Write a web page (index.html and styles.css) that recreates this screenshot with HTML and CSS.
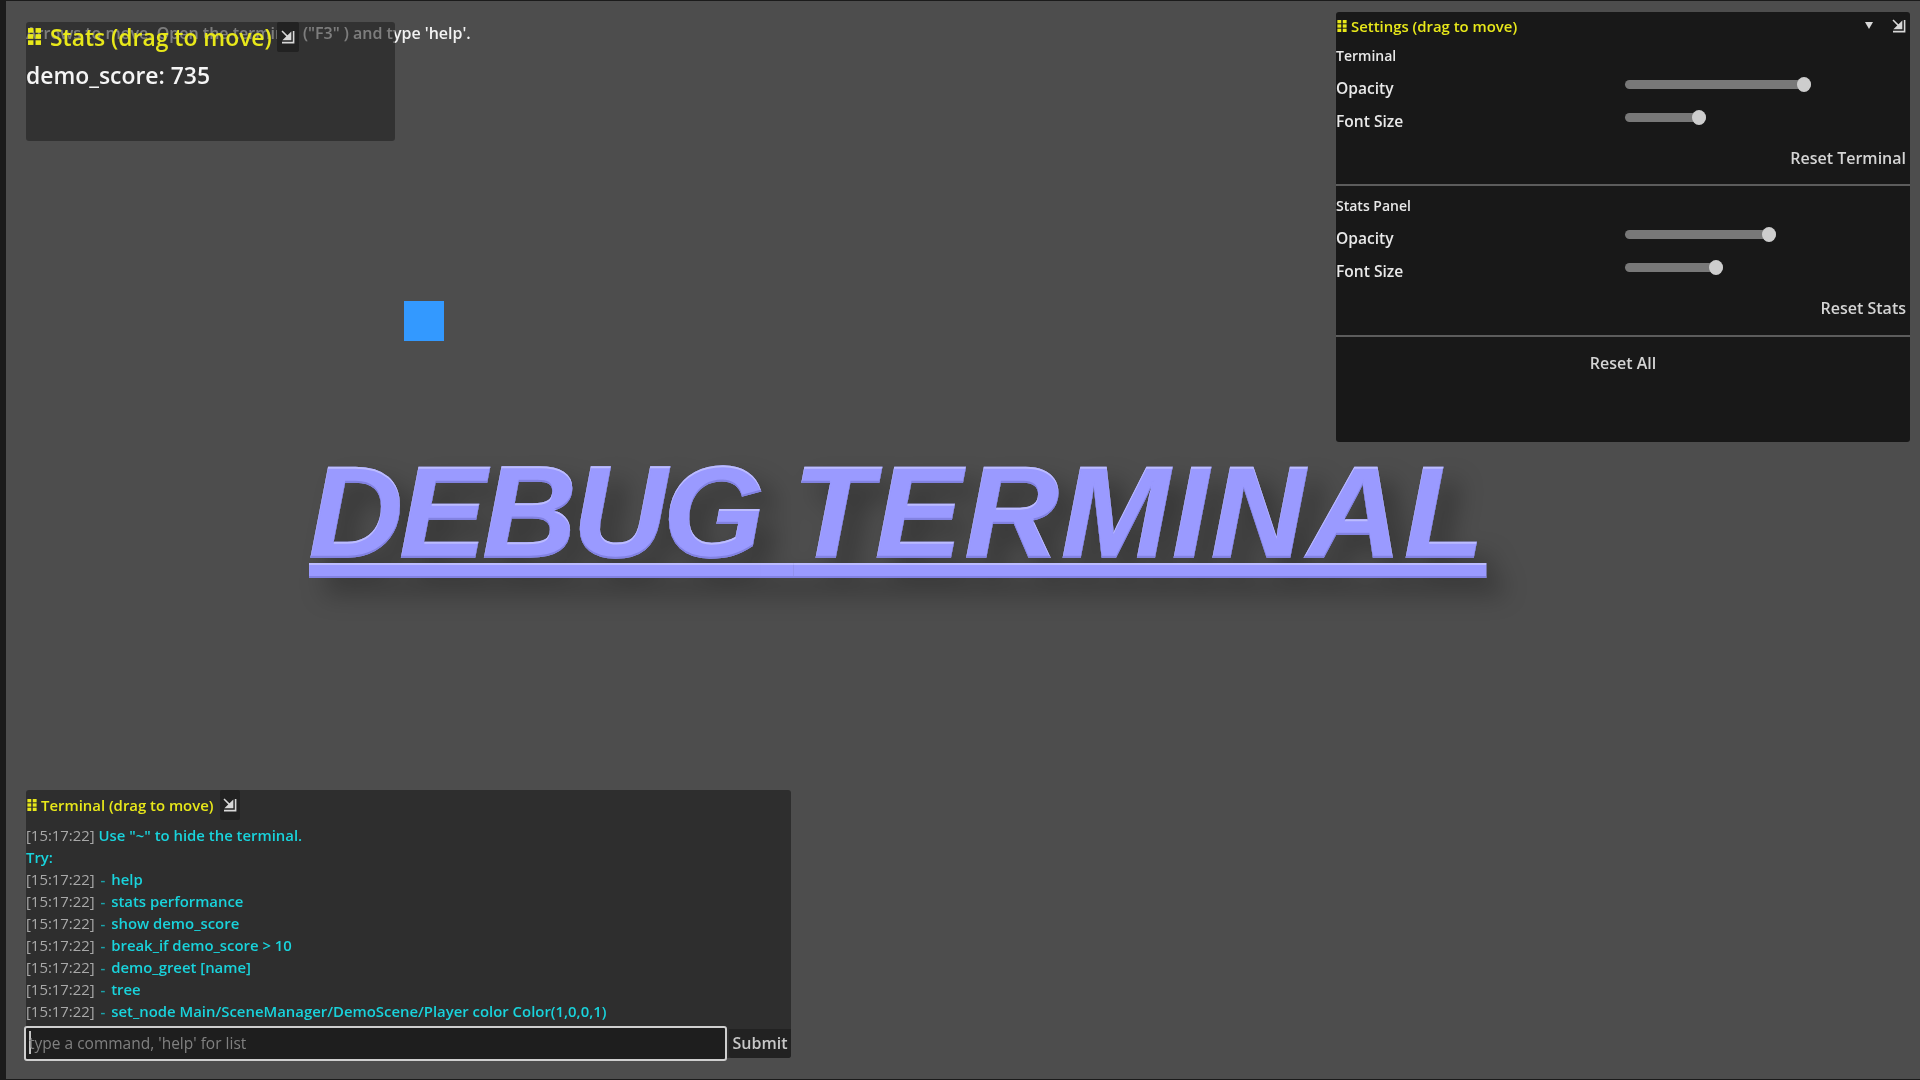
FILE: index.html
```html
<!DOCTYPE html>
<html lang="en">

<head>
    <meta charset="UTF-8">
    <meta name="viewport" content="width=device-width, initial-scale=1.0">
    <title>Debug Terminal</title>
    <link rel="stylesheet" href="styles.css">
</head>

<body>
    <svg width="0" height="0" class="icon-defs">
        <symbol id="grip" viewBox="0 0 10 13">
            <rect x="0" y="0" width="4.2" height="3.6" />
            <rect x="5.8" y="0" width="4.2" height="3.6" />
            <rect x="0" y="4.7" width="4.2" height="3.6" />
            <rect x="5.8" y="4.7" width="4.2" height="3.6" />
            <rect x="0" y="9.4" width="4.2" height="3.6" />
            <rect x="5.8" y="9.4" width="4.2" height="3.6" />
        </symbol>
        <symbol id="resize" viewBox="0 0 14 14">
            <path d="M1 1 L8.6 8.6 M9.6 3.2 V9.6 H3.2 Z" fill="currentColor" stroke="currentColor" stroke-width="1.5" />
            <path d="M12.6 1 V12.6 H1" fill="none" stroke="currentColor" stroke-width="1.6" />
        </symbol>
        <!-- light top edge and dark bottom edge on the big title -->
        <filter id="bevel" x="-2%" y="-5%" width="104%" height="110%" color-interpolation-filters="sRGB">
            <feOffset in="SourceAlpha" dy="2" result="down" />
            <feComposite in="SourceAlpha" in2="down" operator="out" result="topEdge" />
            <feFlood flood-color="#bcbcff" />
            <feComposite in2="topEdge" operator="in" result="light" />
            <feOffset in="SourceAlpha" dy="-2" result="up" />
            <feComposite in="SourceAlpha" in2="up" operator="out" result="bottomEdge" />
            <feFlood flood-color="#8282e2" />
            <feComposite in2="bottomEdge" operator="in" result="dark" />
            <feMerge>
                <feMergeNode in="SourceGraphic" />
                <feMergeNode in="light" />
                <feMergeNode in="dark" />
            </feMerge>
        </filter>
    </svg>

    <main class="game">
        <p class="hint">Arrows to move. Open the terminal ("F3" ) and type 'help'.</p>
        <div class="player"></div>
        <h1 class="game-title"><span class="tight">DEBUG</span> <span class="wide">TERMINAL</span></h1>

        <section class="panel stats-panel">
            <div class="panel-header">
                <svg class="grip"><use href="#grip" /></svg>
                <span class="panel-title">Stats (drag to move)</span>
                <button class="resize-btn"><svg><use href="#resize" /></svg></button>
            </div>
            <div class="stat-line">demo_score: 735</div>
        </section>

        <section class="panel terminal-panel">
            <div class="panel-header">
                <svg class="grip"><use href="#grip" /></svg>
                <span class="panel-title">Terminal (drag to move)</span>
                <button class="resize-btn"><svg><use href="#resize" /></svg></button>
            </div>
            <div class="log">
                <div><span class="time">[15:17:22]</span> Use "~" to hide the terminal.</div>
                <div>Try:</div>
                <div><span class="time">[15:17:22]</span> <span class="dash">-</span> help</div>
                <div><span class="time">[15:17:22]</span> <span class="dash">-</span> stats performance</div>
                <div><span class="time">[15:17:22]</span> <span class="dash">-</span> show demo_score</div>
                <div><span class="time">[15:17:22]</span> <span class="dash">-</span> break_if demo_score &gt; 10</div>
                <div><span class="time">[15:17:22]</span> <span class="dash">-</span> demo_greet [name]</div>
                <div><span class="time">[15:17:22]</span> <span class="dash">-</span> tree</div>
                <div><span class="time">[15:17:22]</span> <span class="dash">-</span> set_node Main/SceneManager/DemoScene/Player color Color(1,0,0,1)</div>
            </div>
            <div class="command-row">
                <div class="command-input"><span class="caret"></span>type a command, 'help' for list</div>
                <button class="submit-btn">Submit</button>
            </div>
        </section>

        <section class="panel settings-panel">
            <div class="settings-header">
                <svg class="grip"><use href="#grip" /></svg>
                <span class="panel-title">Settings (drag to move)</span>
                <span class="collapse-arrow"></span>
                <svg class="settings-resize"><use href="#resize" /></svg>
            </div>

            <div class="settings-group">
                <div class="group-label">Terminal</div>
                <div class="setting-row">
                    <span class="setting-name">Opacity</span>
                    <div class="slider" style="width: 186px"></div>
                </div>
                <div class="setting-row">
                    <span class="setting-name">Font Size</span>
                    <div class="slider" style="width: 81px"></div>
                </div>
                <div class="reset-row"><button class="text-btn">Reset Terminal</button></div>
            </div>

            <div class="settings-group">
                <div class="group-label">Stats Panel</div>
                <div class="setting-row">
                    <span class="setting-name">Opacity</span>
                    <div class="slider" style="width: 151px"></div>
                </div>
                <div class="setting-row">
                    <span class="setting-name">Font Size</span>
                    <div class="slider" style="width: 98px"></div>
                </div>
                <div class="reset-row"><button class="text-btn">Reset Stats</button></div>
            </div>

            <div class="reset-all"><button class="text-btn">Reset All</button></div>
        </section>
    </main>
</body>

</html>
```

FILE: styles.css
```css
* {
    box-sizing: border-box;
}

html,
body {
    height: 100%;
}

body {
    margin: 0;
    padding: 1px 0 1px 6px;
    display: flex;
    background: #1b1b1b;
    font-family: "Open Sans", "Noto Sans", sans-serif;
    font-weight: 600;
    overflow: hidden;
}

button {
    font: inherit;
    border: 0;
    padding: 0;
    background: none;
    color: inherit;
}

.icon-defs {
    position: absolute;
}

/* game view, the panels float over it */
.game {
    position: relative;
    flex: 1;
    background: #4d4d4d;
    filter: blur(0.4px);
}

.hint {
    position: absolute;
    left: 20px;
    top: 21px;
    margin: 0;
    font-size: 16px;
    line-height: 22px;
    color: #f2f2f2;
}

.player {
    position: absolute;
    left: 398px;
    top: 300px;
    width: 40px;
    height: 40px;
    background: #3399ff;
}

.game-title {
    position: absolute;
    left: 303px;
    top: 436px;
    margin: 0;
    font-family: "Liberation Sans", Arial, sans-serif;
    font-size: 130px;
    font-weight: 700;
    font-style: italic;
    line-height: 150px;
    white-space: nowrap;
    word-spacing: -4px;
    color: #9a9aff;
    -webkit-text-stroke: 1.5px #9a9aff;
    text-decoration: underline;
    text-decoration-thickness: 15px;
    text-underline-offset: 6px;
    filter: url(#bevel) drop-shadow(16px 16px 12px rgba(0, 0, 0, 0.3));
}

/* letters of the two words sit a bit differently than the font's own spacing */
.tight {
    letter-spacing: -3.5px;
}

.wide {
    letter-spacing: 2.7px;
}

.panel {
    position: absolute;
    border-radius: 3px;
}

.panel-header {
    display: flex;
    align-items: center;
}

.grip {
    flex: none;
    fill: #e8e81a;
}

.panel-title {
    color: #e8e81a;
    white-space: nowrap;
}

.resize-btn {
    display: flex;
    align-items: center;
    justify-content: center;
    background: #222222;
    color: #d8d8d8;
    border-radius: 2px;
}

.resize-btn svg {
    width: 14px;
    height: 14px;
}

/* stats panel */
.stats-panel {
    left: 20px;
    top: 21px;
    width: 369px;
    height: 119px;
    background: rgba(30, 30, 30, 0.55);
}

.stats-panel .panel-header {
    height: 30px;
}

.stats-panel .grip {
    width: 13px;
    height: 17px;
    margin: -2px 9px 0 2px;
}

.stats-panel .panel-title {
    font-size: 22.9px;
}

.stats-panel .resize-btn {
    width: 22px;
    height: 30px;
    margin-left: 5px;
}

.stat-line {
    margin-top: 8px;
    font-size: 22.9px;
    line-height: 32px;
    color: #f5f5f5;
}

/* terminal */
.terminal-panel {
    left: 20px;
    top: 789px;
    width: 765px;
    height: 268px;
    display: flex;
    flex-direction: column;
    background: #2e2e2e;
}

.terminal-panel .panel-header {
    height: 30px;
}

.terminal-panel .grip {
    width: 10px;
    height: 12px;
    margin: -1px 4px 0 1px;
}

.terminal-panel .panel-title {
    font-size: 14.9px;
}

.terminal-panel .resize-btn {
    width: 20px;
    height: 30px;
    margin-left: 7px;
}

.log {
    flex: 1;
    padding-top: 4px;
    font-size: 14.9px;
    line-height: 22px;
    color: #19d3dc;
    white-space: nowrap;
}

.time {
    color: #a8a8a8;
    font-weight: 500;
}

.dash {
    margin-left: 2px;
    margin-right: 2px;
    color: #1aa3aa;
}

.command-row {
    display: flex;
    height: 29px;
}

.command-input {
    width: 703px;
    height: 35px;
    margin: -3px 0 0 -2px;
    padding: 0 0 2px 3px;
    display: flex;
    align-items: center;
    flex: none;
    background: #1e1e1e;
    border: 2px solid #cfcfcf;
    border-radius: 3px;
    font-size: 15.5px;
    font-weight: 500;
    color: #808080;
}

.caret {
    width: 2px;
    height: 23px;
    margin-right: -2px;
    background: #c4c4c4;
}

.submit-btn {
    flex: 1;
    margin-left: 2px;
    padding-bottom: 2px;
    background: #222222;
    color: #c8c8c8;
    font-size: 16px;
    border-radius: 0 0 3px 3px;
}

/* settings */
.settings-panel {
    left: 1330px;
    top: 11px;
    width: 574px;
    height: 430px;
    background: #181818;
    color: #e8e8e8;
}

.settings-header {
    display: flex;
    align-items: center;
    height: 27px;
    padding-left: 1px;
    padding-right: 4px;
}

.settings-header .grip {
    width: 10px;
    height: 12px;
    margin-right: 4px;
}

.settings-header .panel-title {
    flex: 1;
    font-size: 14.9px;
}

.collapse-arrow {
    width: 0;
    height: 0;
    border-left: 4px solid transparent;
    border-right: 4px solid transparent;
    border-top: 7px solid #d8d8d8;
    margin-right: 19px;
}

.settings-resize {
    width: 14px;
    height: 14px;
    color: #d8d8d8;
}

.settings-group {
    height: 147px;
    padding-top: 7px;
    border-bottom: 2px solid #5c5c5c;
}

.settings-group + .settings-group {
    height: 151px;
    padding-top: 10px;
}

.group-label {
    margin-bottom: 3px;
    font-size: 14px;
    line-height: 20px;
}

.setting-row {
    display: flex;
    height: 33px;
    align-items: center;
}

.setting-name {
    width: 289px;
    flex: none;
    font-size: 15.6px;
    padding-top: 4px;
}

.slider {
    position: relative;
    height: 9px;
    margin-top: -3px;
    border-radius: 5px;
    background: #787878;
}

.slider::after {
    content: "";
    position: absolute;
    right: 0;
    top: -3px;
    width: 14px;
    height: 15px;
    border-radius: 50%;
    background: #cdcdcd;
}

.reset-row {
    display: flex;
    justify-content: flex-end;
    padding: 12px 4px 0 0;
}

.text-btn {
    font-size: 16px;
    line-height: 22px;
    color: #d4d4d4;
}

.reset-all {
    display: flex;
    justify-content: center;
    padding-top: 15px;
}
```
